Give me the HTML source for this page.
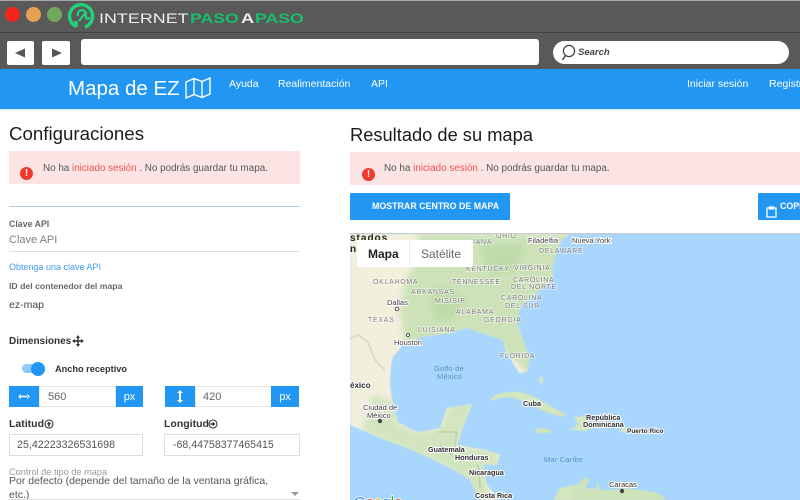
<!DOCTYPE html>
<html lang="es">
<head>
<meta charset="utf-8">
<title>Mapa de EZ</title>
<style>
html,body{margin:0;padding:0;width:800px;height:500px;overflow:hidden;background:#fff;}
body{position:relative;font-family:"Liberation Sans",sans-serif;color:#212121;}
.a{position:absolute;white-space:nowrap;}
.box{position:absolute;}
.blue{background:#2196f3;color:#fff;}
.alert{position:absolute;background:#fde4e4;}
.ic{position:absolute;width:13px;height:13px;border-radius:50%;background:#f03a2e;color:#fff;font-size:10px;font-weight:bold;text-align:center;line-height:13px;}
.lg{position:absolute;top:10px;font-size:14px;line-height:17px;white-space:nowrap;transform-origin:0 50%;}
.map text{font-family:"Liberation Sans",sans-serif;}
</style>
</head>
<body>
<!-- browser chrome -->
<div class="box" style="left:0;top:0;width:800px;height:69px;background:#595959;"></div>
<div class="box" style="left:0;top:0;width:800px;height:1px;background:#a8a8a8;"></div>
<div class="box" style="left:0;top:32px;width:800px;height:1px;background:#444;"></div>
<div class="box" style="left:5px;top:7px;width:15px;height:15px;border-radius:50%;background:#f2261d;"></div>
<div class="box" style="left:26px;top:7px;width:15px;height:15px;border-radius:50%;background:#e8a052;"></div>
<div class="box" style="left:47px;top:7px;width:15px;height:15px;border-radius:50%;background:#6fa85c;"></div>
<svg class="box" style="left:67px;top:2px;" width="30" height="28" viewBox="0 0 30 28" fill="none" stroke="#1ed47a">
<path d="M9 24.5 A11.5 11.5 0 1 1 18 25" stroke-width="3.4"/>
<path d="M9 25 L9 19" stroke-width="3.4"/>
<path d="M12 19 L19 10 M11 14 A4.3 4.3 0 0 1 18.5 10 L19 16 A2 2 0 0 0 22.5 15" stroke-width="2.2"/>
</svg>
<div class="lg" style="left:99px;color:#eee;transform:scaleX(1.28);">INTERNET</div>
<div class="lg" style="left:190px;color:#17bf6b;font-weight:bold;transform:scaleX(1.26);">PASO</div>
<div class="lg" style="left:241px;color:#eee;font-weight:bold;transform:scaleX(1.3);">A</div>
<div class="lg" style="left:255px;color:#17bf6b;font-weight:bold;transform:scaleX(1.26);">PASO</div>

<div class="box" style="left:7px;top:41px;width:27px;height:24px;background:#fff;border-radius:2px;"></div>
<div class="box" style="left:42px;top:41px;width:28px;height:24px;background:#fff;border-radius:2px;"></div>
<svg class="box" style="left:7px;top:41px;" width="64" height="24"><path d="M8 12 L18 7.5 V16.5Z" fill="#555"/><path d="M55 12 L45 7.5 V16.5Z" fill="#555"/></svg>
<div class="box" style="left:81px;top:39px;width:458px;height:26px;background:#fff;border-radius:3px;"></div>
<div class="box" style="left:553px;top:41px;width:236px;height:23px;background:#fff;border-radius:12px;"></div>
<svg class="box" style="left:560px;top:43px;" width="18" height="19"><circle cx="9" cy="8" r="5.6" fill="none" stroke="#444" stroke-width="1.3"/><path d="M5.5 12.5 L2.5 17" stroke="#444" stroke-width="1.5"/></svg>
<div class="a" style="left:578px;top:47px;font-size:9.5px;font-style:italic;font-weight:bold;color:#444;line-height:12px;">Search</div>

<!-- navbar -->
<div class="box blue" style="left:0;top:69px;width:800px;height:40px;"></div>
<div class="box" style="left:0;top:109px;width:800px;height:2px;background:#e3f2fd;"></div>
<div class="a" style="left:68px;top:75px;font-size:20.5px;line-height:28px;color:#fff;">Mapa de EZ</div>
<svg class="box" style="left:185px;top:77px;" width="26" height="22" viewBox="0 0 26 22" fill="none" stroke="#fff" stroke-width="1.4"><path d="M1 5 L9 1.5 L17 4.5 L25 1 V17 L17 20.5 L9 17.5 L1 21Z M9 1.5 V17.5 M17 4.5 V20.5"/></svg>
<div class="a" style="left:229px;top:77px;font-size:10.5px;line-height:14px;color:#fff;">Ayuda</div>
<div class="a" style="left:278px;top:77px;font-size:10.5px;line-height:14px;color:#fff;">Realimentación</div>
<div class="a" style="left:371px;top:77px;font-size:10.5px;line-height:14px;color:#fff;">API</div>
<div class="a" style="left:687px;top:77px;font-size:10.5px;line-height:14px;color:#fff;">Iniciar sesión</div>
<div class="a" style="left:769px;top:77px;font-size:10.5px;line-height:14px;color:#fff;">Registrarse</div>

<!-- left column -->
<div class="a" style="left:9px;top:122px;font-size:18.7px;line-height:24px;color:#1c1c1c;">Configuraciones</div>
<div class="alert" style="left:9px;top:151px;width:291px;height:33px;"></div>
<div class="ic" style="left:20px;top:167px;">!</div>
<div class="a" style="left:43px;top:162px;font-size:9.85px;line-height:14px;color:#555;">No ha <span style="color:#ef5350;">iniciado sesión</span> . No podrás guardar tu mapa.</div>
<div class="box" style="left:9px;top:206px;width:291px;height:1px;background:#a9cde8;"></div>
<div class="a" style="left:9px;top:218px;font-size:8.8px;line-height:12px;color:#666;font-weight:bold;">Clave API</div>
<div class="a" style="left:9px;top:233px;font-size:11px;line-height:15px;color:#808080;">Clave API</div>
<div class="box" style="left:9px;top:251px;width:291px;height:1px;background:#ddd;"></div>
<div class="a" style="left:9px;top:261px;font-size:9px;line-height:13px;color:#3f9bee;">Obtenga una clave API</div>
<div class="a" style="left:9px;top:280px;font-size:8.7px;line-height:13px;color:#666;font-weight:bold;">ID del contenedor del mapa</div>
<div class="a" style="left:9px;top:298px;font-size:10.5px;line-height:15px;color:#444;">ez-map</div>
<div class="a" style="left:9px;top:335px;font-size:10px;font-weight:bold;line-height:14px;color:#333;">Dimensiones</div>
<svg class="box" style="left:72px;top:335px;" width="12" height="12" viewBox="0 0 12 12"><path d="M6 0 L8 3 H6.7 V5.3 H9 V4 L12 6 L9 8 V6.7 H6.7 V9 H8 L6 12 L4 9 H5.3 V6.7 H3 V8 L0 6 L3 4 V5.3 H5.3 V3 H4Z" fill="#333"/></svg>
<div class="box" style="left:22px;top:364px;width:22px;height:9px;border-radius:5px;background:#90caf9;"></div>
<div class="box" style="left:31px;top:362px;width:14px;height:14px;border-radius:50%;background:#2196f3;"></div>
<div class="a" style="left:55px;top:363px;font-size:9.2px;font-weight:bold;line-height:13px;color:#333;">Ancho receptivo</div>

<div class="box blue" style="left:9px;top:386px;width:30px;height:21px;"></div>
<svg class="box" style="left:18px;top:391px;" width="12" height="11"><path d="M0 5.5 L3 3 V8Z M12 5.5 L9 3 V8Z M2 4.7 H10 V6.3 H2Z" fill="#fff"/></svg>
<div class="box" style="left:39px;top:386px;width:77px;height:21px;background:#fff;box-shadow:inset 0 0 0 1px #e8e8e8;"></div>
<div class="a" style="left:48px;top:390px;font-size:11px;line-height:15px;color:#666;">560</div>
<div class="box blue" style="left:116px;top:386px;width:27px;height:21px;font-size:11px;line-height:23px;text-align:center;">px</div>

<div class="box blue" style="left:165px;top:386px;width:30px;height:21px;"></div>
<svg class="box" style="left:174px;top:390px;" width="12" height="13"><path d="M6 0 L9 3 H7 V10 H9 L6 13 L3 10 H5 V3 H3Z" fill="#fff"/></svg>
<div class="box" style="left:195px;top:386px;width:77px;height:21px;background:#fff;box-shadow:inset 0 0 0 1px #e8e8e8;"></div>
<div class="a" style="left:203px;top:390px;font-size:11px;line-height:15px;color:#666;">420</div>
<div class="box blue" style="left:271px;top:386px;width:28px;height:21px;font-size:11px;line-height:23px;text-align:center;">px</div>

<div class="a" style="left:9px;top:417px;font-size:10.5px;font-weight:bold;line-height:15px;color:#333;">Latitud</div>
<svg class="box" style="left:44px;top:419px;" width="10" height="10"><circle cx="5" cy="5" r="4" fill="none" stroke="#333" stroke-width="1.1"/><path d="M5 2.5 L7.3 5.3 H5.8 V7.5 H4.2 V5.3 H2.7Z" fill="#333"/></svg>
<div class="a" style="left:164px;top:417px;font-size:10.5px;font-weight:bold;line-height:15px;color:#333;">Longitud</div>
<svg class="box" style="left:208px;top:419px;" width="10" height="10"><circle cx="5" cy="5" r="4" fill="none" stroke="#333" stroke-width="1.1"/><path d="M7.5 5 L4.7 7.3 V5.8 H2.5 V4.2 H4.7 V2.7Z" fill="#333"/></svg>
<div class="box" style="left:9px;top:434px;width:134px;height:22px;background:#fff;box-shadow:inset 0 0 0 1px #ddd;"></div>
<div class="a" style="left:17px;top:438px;font-size:10.7px;line-height:15px;color:#555;">25,42223326531698</div>
<div class="box" style="left:164px;top:434px;width:136px;height:22px;background:#fff;box-shadow:inset 0 0 0 1px #ddd;"></div>
<div class="a" style="left:173px;top:438px;font-size:10.6px;line-height:15px;color:#555;">-68,44758377465415</div>
<div class="a" style="left:9px;top:466px;font-size:9.2px;line-height:13px;color:#999;">Control de tipo de mapa</div>
<div class="a" style="left:9px;top:474px;font-size:10.5px;line-height:15px;color:#555;">Por defecto (depende del tamaño de la ventana gráfica,</div>
<div class="a" style="left:9px;top:488px;font-size:10.5px;line-height:15px;color:#555;">etc.)</div>
<div class="box" style="left:9px;top:499px;width:291px;height:1px;background:#ddd;"></div>
<svg class="box" style="left:290px;top:491px;" width="10" height="6"><path d="M1 1 H9 L5 5Z" fill="#999"/></svg>

<!-- right column -->
<div class="a" style="left:350px;top:123px;font-size:18.3px;line-height:24px;color:#1c1c1c;">Resultado de su mapa</div>
<div class="alert" style="left:350px;top:152px;width:450px;height:33px;"></div>
<div class="ic" style="left:362px;top:168px;">!</div>
<div class="a" style="left:384px;top:162px;font-size:9.9px;line-height:14px;color:#555;">No ha <span style="color:#ef5350;">iniciado sesión</span> . No podrás guardar tu mapa.</div>
<div class="box blue" style="left:350px;top:193px;width:160px;height:27px;border-radius:1px;"></div>
<div class="a" style="left:372px;top:200px;font-size:8.85px;font-weight:bold;line-height:13px;color:#fff;">MOSTRAR CENTRO DE MAPA</div>
<div class="box blue" style="left:758px;top:193px;width:42px;height:27px;border-radius:1px;"></div>
<svg class="box" style="left:766px;top:205px;" width="11" height="13" fill="none" stroke="#fff" stroke-width="1.3"><path d="M1 3 H10 V12 H1Z"/><path d="M3.5 2 H7.5 V4 H3.5Z" fill="#fff"/></svg>
<div class="a" style="left:780px;top:200px;font-size:8.85px;font-weight:bold;line-height:13px;color:#fff;width:20px;overflow:hidden;">COPIAR</div>

<!-- map -->
<div class="box" style="left:349px;top:233px;width:451px;height:1px;background:#ccc;"></div>
<svg class="box map" style="left:350px;top:234px;" width="450" height="266" viewBox="350 234 450 266">
<defs>
<clipPath id="land"><path d="M350 234 H570 L562 240 L557 250 L553 265 L553 280 L537 293 L520 307 L517 323 L525 345 L530 358 L527 372 L519 373 L514 365 L505 350 L503 340 L487 335 L467 328 L450 333 L423 337 L403 345 L393 357 L391 365 L390 385 L393 405 L398 422 L412 430 L420 432 L440 428 L447 408 L472 404 L463 428 L457 445 L487 450 L500 455 L497 465 L483 465 L487 485 L500 500 H480 L470 480 L450 468 L430 458 L407 448 L380 438 L350 425Z"/></clipPath>
</defs>
<rect x="350" y="234" width="450" height="266" fill="#a8d6fd"/>
<g style="filter:blur(.5px);">
<path d="M350 234 H570 L562 240 L557 250 L553 265 L553 280 L537 293 L520 307 L517 323 L525 345 L530 358 L527 372 L519 373 L514 365 L505 350 L503 340 L487 335 L467 328 L450 333 L423 337 L403 345 L393 357 L391 365 L390 385 L393 405 L398 422 L412 430 L420 432 L440 428 L447 408 L472 404 L463 428 L457 445 L487 450 L500 455 L497 465 L483 465 L487 485 L500 500 H480 L470 480 L450 468 L430 458 L407 448 L380 438 L350 425Z" fill="#f2efdd"/>
<g clip-path="url(#land)"><g style="filter:blur(3px);">
<path d="M415 234 H575 L560 285 L530 310 L535 380 L500 345 L470 335 L430 340 L405 345 L400 310 L405 280 L425 250Z" fill="#cde2b8"/>
<path d="M430 290 L445 285 L465 300 L455 318 L435 322Z M480 245 L525 245 L515 270 L490 275Z" fill="#bedba9"/>
<path d="M372 395 L392 400 L400 425 L415 431 L440 428 L450 405 L475 400 L465 430 L455 446 L495 450 L500 466 L485 468 L490 500 H475 L445 466 L420 455 L390 445 L362 430Z" fill="#d3e5bf"/>
</g></g>
<!-- Caribbean islands -->
<path d="M491 398 C498 392 510 391 520 392 C535 395 548 405 566 415 L562 417 C545 413 530 404 515 398 C505 396 498 398 491 401Z" fill="#d3e6bd"/>
<path d="M536 429 C541 427 549 429 552 431 C548 434 540 434 536 432Z" fill="#cfe3ba"/>
<path d="M540 376 L543 378 L542 386 L539 382Z" fill="#d5e6bd"/>
<path d="M574 417 L583 416 L590 422 L607 425 L590 429 L586 431 L575 430 L566 429 L574 428 L578 423Z" fill="#d3e6bd"/>
<path d="M560 411 L565 415 L560 417 L556 415Z" fill="#cfe3ba"/>
<path d="M621 428 H630 L628 432 H621Z" fill="#d5e6bd"/>
<!-- South America -->
<path d="M560 500 L565 490 L575 486 L585 478 L590 478 L585 488 L595 489 L598 482 L600 490 L610 490 L625 488 L640 490 L655 492 L668 500Z" fill="#cfe3ba"/>
<path d="M553 500 L560 488 L575 485 L572 500Z" fill="#d3e6bd"/>
<!-- Borders -->
<path d="M350 339 L358 335 L368 342 L375 360 L385 370" fill="none" stroke="#b5ae92" stroke-width=".6"/>
<path d="M438 432 L457 432 L455 446 M440 445 L452 455 M460 460 L485 456 M478 465 L480 488" fill="none" stroke="#9aa88a" stroke-width=".6"/>
</g>
<g font-size="7" letter-spacing=".7" fill="#7f7f7f" stroke="#fff" stroke-width="1.6" paint-order="stroke" stroke-opacity=".55">
<text x="373" y="284">OKLAHOMA</text>
<text x="452" y="284">TENNESSEE</text>
<text x="411" y="294">ARKANSAS</text>
<text x="435" y="303">MISISIP</text>
<text x="456" y="314">ALABAMA</text>
<text x="484" y="322">GEORGIA</text>
<text x="368" y="322">TEXAS</text>
<text x="418" y="332">LUISIANA</text>
<text x="500" y="358">FLORIDA</text>
<text x="466" y="271">KENTUCKY</text>
<text x="514" y="270">VIRGINIA</text>
<text x="513" y="282">CAROLINA</text>
<text x="511" y="289">DEL NORTE</text>
<text x="501" y="300">CAROLINA</text>
<text x="505" y="308">DEL SUR</text>
<text x="539" y="253">DELAWARE</text>
<text x="496" y="238">OHIO</text>
<text x="473" y="244">IANA</text>
</g>
<g font-size="7.5" fill="#3c3c3c" stroke="#fff" stroke-width="2" paint-order="stroke">
<text x="387" y="305">Dallas</text>
<text x="394" y="345">Houston</text>
<text x="528" y="243">Filadelfia</text>
<text x="572" y="243">Nueva York</text>
<text x="363" y="410">Ciudad de</text>
<text x="367" y="418">México</text>
</g>
<g font-size="7.2" fill="#2d2d2d" font-weight="bold" stroke="#fff" stroke-width="2" paint-order="stroke">
<text x="350" y="388" font-size="8">éxico</text>
<text x="523" y="406">Cuba</text>
<text x="428" y="452">Guatemala</text>
<text x="455" y="460">Honduras</text>
<text x="469" y="475">Nicaragua</text>
<text x="475" y="498">Costa Rica</text>
<text x="586" y="420">República</text>
<text x="583" y="427">Dominicana</text>
<text x="627" y="433" font-size="6.5">Puerto Rico</text>
<text x="609" y="487" font-weight="normal" font-size="7.5">Caracas</text>
</g>
<g font-size="7.5" fill="#5d8fc4" letter-spacing=".2">
<text x="434" y="371">Golfo de</text>
<text x="437" y="379">México</text>
<text x="544" y="462">Mar Caribe</text>
</g>
<g fill="#444"><circle cx="397" cy="309" r="1.8" fill="#fff" stroke="#555"/><circle cx="408" cy="335" r="1.6" fill="#fff" stroke="#555"/><circle cx="380" cy="421" r="2.2"/><circle cx="622" cy="491" r="2.2"/></g>
<text x="350" y="241" font-size="10" font-weight="bold" fill="#222" letter-spacing="1">stados</text>
<text x="350" y="252" font-size="10" font-weight="bold" fill="#222">n</text>
<text x="354" y="507" font-size="15" stroke="#fff" stroke-width="1.5" paint-order="stroke"><tspan fill="#4285f4">G</tspan><tspan fill="#ea4335">o</tspan><tspan fill="#fbbc05">o</tspan><tspan fill="#4285f4">g</tspan><tspan fill="#34a853">l</tspan><tspan fill="#ea4335">e</tspan></text>
<rect x="357" y="240" width="116" height="27" fill="#fff"/>
<rect x="409" y="240" width="1" height="27" fill="#eee"/>
<text x="368" y="258" font-size="12" font-weight="bold" fill="#222">Mapa</text>
<text x="421" y="258" font-size="12" fill="#666">Satélite</text>
</svg>
</body>
</html>
